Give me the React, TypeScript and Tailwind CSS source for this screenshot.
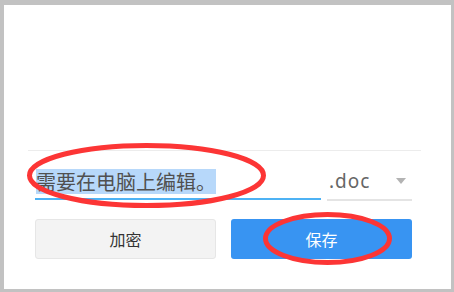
import { useState } from "react";

// Save-as dialog footer with annotation circles
const font = "font-['Noto_Sans_CJK_SC','Noto_Sans',sans-serif]";

export default function App() {
  const [name] = useState("需要在电脑上编辑。");

  return (
    <div className={`relative w-[454px] h-[292px] bg-[#c2c2c2] pt-[5px] pl-[4px] pr-[3px] pb-[3px] ${font}`}>
      <div className="flex h-full flex-col bg-white">
        <div className="h-[145px]" />
        <div className="ml-[24px] mr-[30px] h-px bg-[#ececec]" />

        <div className="flex pl-[31px] pr-[39px] gap-[6px]">
          {/* file name */}
          <div className="flex h-[49px] w-[286px] items-center border-b-2 border-[#4db2f4] pl-px pt-[13px]">
            <span className="bg-[#b7d8fa] text-[20px] leading-[25px] text-[#505050]">{name}</span>
          </div>
          {/* extension select */}
          <div className="flex h-[50px] flex-1 items-center justify-between border-b-2 border-[#e4e4e4] pl-[2px] pr-[6px] pt-[12px]">
            <span className="font-['Noto_Sans',sans-serif] text-[19px] leading-[25px] tracking-[1px] text-[#666]">.doc</span>
            <span className="h-0 w-0 border-x-[5px] border-t-[6px] border-x-transparent border-t-[#b3b3b3]" />
          </div>
        </div>

        <div className="mt-[18px] flex gap-[15px] pl-[31px] pr-[39px]">
          <button className="h-[40px] w-[181px] rounded-[3px] border border-[#e6e6e6] bg-[#f3f3f3] text-[16px] text-[#333]">
            加密
          </button>
          <button className="h-[40px] w-[181px] rounded-[3px] bg-[#3894f2] text-[16px] text-white">
            保存
          </button>
        </div>
      </div>

      {/* red annotation rings */}
      <svg className="pointer-events-none absolute inset-0" width="454" height="292">
        <ellipse cx="146.5" cy="175.5" rx="117" ry="30" fill="none" stroke="#fc3535" strokeWidth="5" />
        <ellipse cx="327.5" cy="238.5" rx="62" ry="24" fill="none" stroke="#fc3535" strokeWidth="5" />
      </svg>
    </div>
  );
}
